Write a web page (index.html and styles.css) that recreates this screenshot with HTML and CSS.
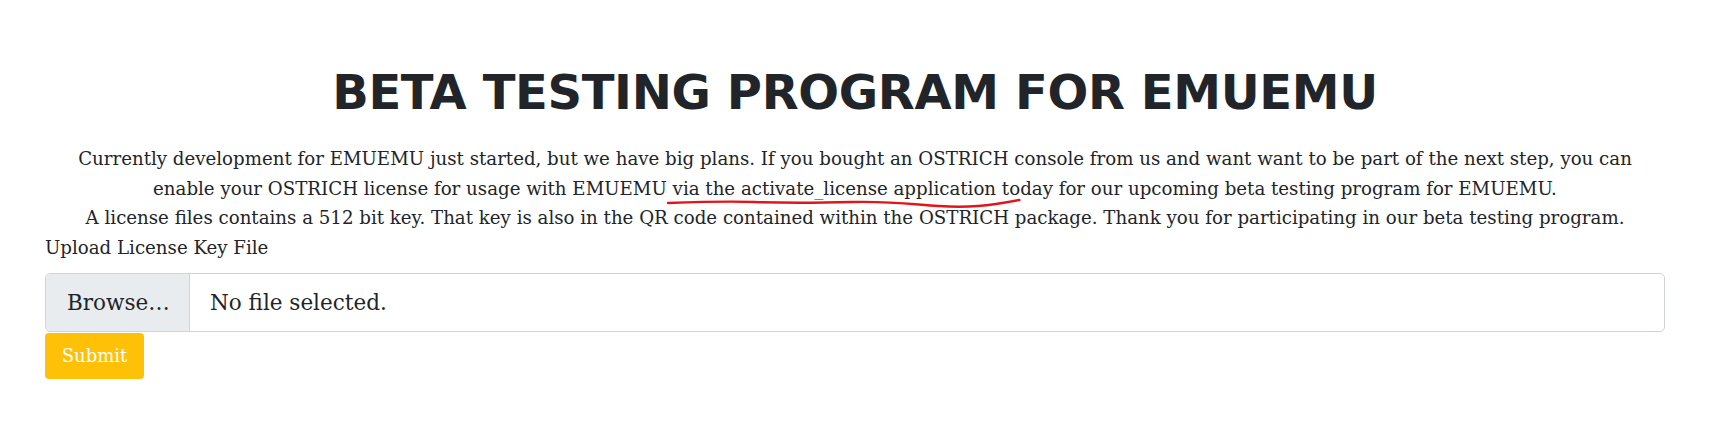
FILE: index.html
```html
<!DOCTYPE html>
<html lang="en">
<head>
<meta charset="utf-8">
<title>Beta testing program for EMUEMU</title>
<link rel="stylesheet" href="styles.css">
</head>
<body>
<main class="page">
  <h1 class="title">BETA TESTING PROGRAM FOR EMUEMU</h1>
  <p class="intro">Currently development for EMUEMU just started, but we have big plans. If you bought an OSTRICH console from us and want want to be part of the next step, you can<br>enable your OSTRICH license for usage with EMUEMU<span class="mark"> via the activate_license application to<svg class="squiggle" viewBox="0 0 364 12" preserveAspectRatio="none"><path d="M1 6 C 30 5, 60 4, 90 5 S 150 6, 190 5 S 250 7, 280 9 S 330 9, 363 3" fill="none" stroke="#e3151a" stroke-width="2.4" stroke-linecap="round"/></svg></span>day for our upcoming beta testing program for EMUEMU.<br>A license files contains a 512 bit key. That key is also in the QR code contained within the OSTRICH package. Thank you for participating in our beta testing program.</p>
  <form class="upload">
    <label class="label">Upload License Key File</label>
    <div class="file">
      <span class="file-btn">Browse…</span>
      <span class="file-name">No file selected.</span>
    </div>
    <button type="button" class="submit">Submit</button>
  </form>
</main>
</body>
</html>
```
FILE: styles.css
```css
html, body {
  margin: 0;
  padding: 0;
  background: #fff;
}
body {
  font-family: "DejaVu Serif", "Liberation Serif", serif;
  color: #212529;
}
.page {
  padding: 0 51px 0 45px;
}
.title {
  margin: 0;
  padding-top: 62px;
  font-family: "DejaVu Sans", "Liberation Sans", sans-serif;
  font-weight: 700;
  font-size: 48px;
  line-height: 60px;
  letter-spacing: -0.35px;
  text-align: center;
  color: #212529;
}
.intro {
  margin: 22px 0 0;
  font-size: 18.2px;
  line-height: 29.5px;
  text-align: center;
}
.mark {
  position: relative;
}
.squiggle {
  position: absolute;
  left: 0;
  right: 0;
  bottom: -10px;
  width: 100%;
  height: 12px;
  overflow: visible;
}
.upload {
  display: flex;
  flex-direction: column;
  align-items: flex-start;
}
.label {
  font-size: 18.2px;
  line-height: 29px;
  margin-bottom: 11px;
}
.file {
  align-self: stretch;
  display: flex;
  height: 59px;
  box-sizing: border-box;
  border: 1px solid #ced4da;
  border-radius: 5px;
  overflow: hidden;
  font-size: 21.5px;
}
.file-btn {
  display: flex;
  align-items: center;
  width: 144px;
  box-sizing: border-box;
  padding-left: 21px;
  background: #e9ecef;
  border-right: 1px solid #ced4da;
}
.file-name {
  display: flex;
  align-items: center;
  padding-left: 20px;
}
.submit {
  margin-top: 1px;
  width: 99px;
  height: 46px;
  border: none;
  border-radius: 4px;
  background: #ffc107;
  color: #fff;
  font-family: "DejaVu Serif", "Liberation Serif", serif;
  font-size: 18px;
  padding: 0;
}
```
